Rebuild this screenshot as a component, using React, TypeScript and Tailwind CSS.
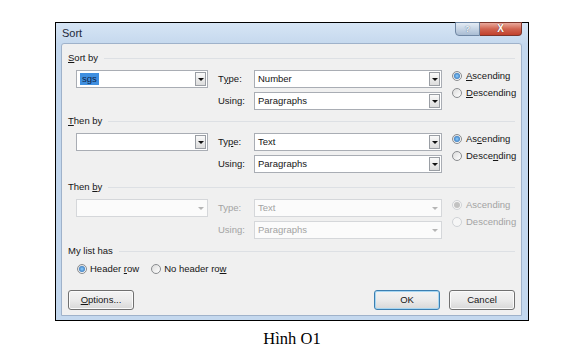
import React from "react";

function Radio({ checked = false, disabled = false }: { checked?: boolean; disabled?: boolean }) {
  return (
    <span
      className={`flex h-[10px] w-[10px] shrink-0 items-center justify-center rounded-full border ${
        disabled ? "border-[#cfd2d6] bg-[#f6f6f6]" : "border-[#8a8c8f] bg-linear-to-br from-[#dcdcdc] to-[#ffffff]"
      }`}
    >
      {checked && (
        <span
          className={`h-[6px] w-[6px] rounded-full ${
            disabled ? "bg-[#c2c2c2]" : "bg-radial from-[#8fd0ff] to-[#1d5fa8]"
          }`}
        />
      )}
    </span>
  );
}

function RadioItem({
  children,
  checked,
  disabled,
  gap = "gap-[4px]",
}: {
  children: React.ReactNode;
  checked?: boolean;
  disabled?: boolean;
  gap?: string;
}) {
  return (
    <div className={`flex h-[12px] items-center ${gap} ${disabled ? "text-[#a3a3a3]" : ""}`}>
      <Radio checked={checked} disabled={disabled} />
      <span className="leading-none">{children}</span>
    </div>
  );
}

function Combo({ value, selected, disabled }: { value?: string; selected?: boolean; disabled?: boolean }) {
  return (
    <div
      className={`flex h-full items-stretch border p-px ${
        disabled ? "border-[#d5d7da] bg-[#fbfbfb] text-[#a3a3a3]" : "border-[#a9adb4] bg-white"
      }`}
    >
      <div className="flex flex-1 items-center pl-[2px]">
        {value &&
          (selected ? (
            <span className="bg-[#3f8fe0] px-[2px] leading-[12px] text-[#0d2448]">{value}</span>
          ) : (
            <span className="leading-none">{value}</span>
          ))}
      </div>
      {disabled ? (
        <div className="flex w-[11px] items-center justify-center">
          <span className="h-0 w-0 border-x-[3px] border-t-[3px] border-x-transparent border-t-[#b5b5b5]" />
        </div>
      ) : (
        <div className="flex w-[11px] items-center justify-center border border-[#9a9ea4] bg-linear-to-b from-[#fafafa] to-[#dcdcdc]">
          <span className="h-0 w-0 border-x-[3px] border-t-[3px] border-x-transparent border-t-[#111]" />
        </div>
      )}
    </div>
  );
}

function GroupLabel({ children }: { children: React.ReactNode }) {
  return (
    <div className="flex h-[14px] items-center px-[6px]">
      <span className="leading-none">{children}</span>
      <div className="ml-[6px] h-px flex-1 bg-[#dde0e4]" />
    </div>
  );
}

function SortSection({
  label,
  first,
  type,
  typeLabel,
  asc,
  desc,
  selected,
  disabled,
  className,
}: {
  label: React.ReactNode;
  first: string;
  type: string;
  typeLabel: React.ReactNode;
  asc: React.ReactNode;
  desc: React.ReactNode;
  selected?: boolean;
  disabled?: boolean;
  className?: string;
}) {
  return (
    <div className={className}>
      <GroupLabel>{label}</GroupLabel>
      <div className="mt-[5px] flex pl-[14px]">
        <div className="grid grid-cols-[132px_46px_188px] grid-rows-[18px_18px] gap-y-[4px]">
          <Combo value={first} selected={selected} disabled={disabled} />
          <div className={`flex items-center pl-[10px] ${disabled ? "text-[#a3a3a3]" : ""}`}>{typeLabel}</div>
          <Combo value={type} disabled={disabled} />
          <div />
          <div className={`flex items-center pl-[10px] ${disabled ? "text-[#a3a3a3]" : ""}`}>Using:</div>
          <Combo value="Paragraphs" disabled={disabled} />
        </div>
        <div className="ml-[10px] flex flex-col gap-[5px]">
          <RadioItem checked disabled={disabled}>{asc}</RadioItem>
          <RadioItem disabled={disabled}>{desc}</RadioItem>
        </div>
      </div>
    </div>
  );
}

function Button({ children, primary }: { children: React.ReactNode; primary?: boolean }) {
  return (
    <div
      className={`flex h-[20px] w-[66px] items-center justify-center rounded-[3px] border bg-linear-to-b from-[#f3f3f3] via-[#ebebeb] to-[#d8d8d8] ${
        primary ? "border-[#3c7fb1] shadow-[inset_0_0_0_1px_#a6d6f2]" : "border-[#707070] shadow-[inset_0_0_0_1px_#fbfbfb]"
      }`}
    >
      {children}
    </div>
  );
}

export default function App() {
  return (
    <div className="min-h-screen bg-white pt-[22px] font-['Liberation_Sans',Arial,sans-serif] text-[9.5px] text-[#161616]">
      <div className="ml-[55px] flex h-[299px] w-[474px] flex-col border border-black bg-[#c4d8ee]">
        <div className="flex h-[20px] items-start justify-between bg-linear-to-b from-[#d6e5f5] to-[#c6d9ee] pl-[6px] pr-[6px]">
          <span className="self-center text-[11px] leading-none text-[#1e2a3a]">Sort</span>
          <div className="flex -mt-px">
            <div className="flex h-[14px] w-[25px] items-center justify-center rounded-bl-[4px] border border-[#6f86a3] bg-linear-to-b from-[#e4ecf5] to-[#a9bcd3] text-[9px] font-bold leading-none text-[#eef3f9] [text-shadow:0_0_1px_#3d5775]">
              ?
            </div>
            <div className="flex h-[14px] w-[42px] items-center justify-center rounded-br-[4px] border border-l-0 border-[#7c352b] bg-linear-to-b from-[#e9a99c] via-[#d06350] to-[#c2412c] text-[10px] font-bold leading-none text-white [text-shadow:0_0_1px_#5a1a10]">
              X
            </div>
          </div>
        </div>
        <div className="mb-[4px] ml-[5px] mr-[6px] flex h-[273px] flex-col rounded-t-[3px] border border-[#9fb2ca] bg-[#f0f0f0] pt-[7px]">
          <SortSection
            label={<><span className="underline">S</span>ort by</>}
            first="sgs"
            selected
            type="Number"
            typeLabel={<>T<span className="underline">y</span>pe:</>}
            asc={<><span className="underline">A</span>scending</>}
            desc={<><span className="underline">D</span>escending</>}
          />
          <SortSection
            className="mt-[4px]"
            label={<><span className="underline">T</span>hen by</>}
            first=""
            type="Text"
            typeLabel={<>Ty<span className="underline">p</span>e:</>}
            asc={<>As<span className="underline">c</span>ending</>}
            desc={<>Desce<span className="underline">n</span>ding</>}
          />
          <SortSection
            className="mt-[7px]"
            label={<>Then <span className="underline">b</span>y</>}
            first=""
            type="Text"
            disabled
            typeLabel={<>Type:</>}
            asc={<>Ascending</>}
            desc={<>Descending</>}
          />
          <div className="mt-[5px]">
            <GroupLabel>My list has</GroupLabel>
          </div>
          <div className="mt-[4px] flex h-[14px] items-center pl-[15px]">
            <RadioItem checked gap="gap-[3px]">
              Header <span className="underline">r</span>ow
            </RadioItem>
            <div className="ml-[12px]">
              <RadioItem gap="gap-[3px]">
                No header ro<span className="underline">w</span>
              </RadioItem>
            </div>
          </div>
          <div className="mt-[14px] flex px-[6px]">
            <Button>
              <span>
                <span className="underline">O</span>ptions...
              </span>
            </Button>
            <div className="ml-auto flex gap-[9px]">
              <Button primary>OK</Button>
              <Button>Cancel</Button>
            </div>
          </div>
        </div>
      </div>
      <div className="ml-[55px] mt-[10px] w-[474px] text-center font-['Liberation_Serif',serif] text-[16.5px] leading-[16px] text-black">
        Hình O1
      </div>
    </div>
  );
}
